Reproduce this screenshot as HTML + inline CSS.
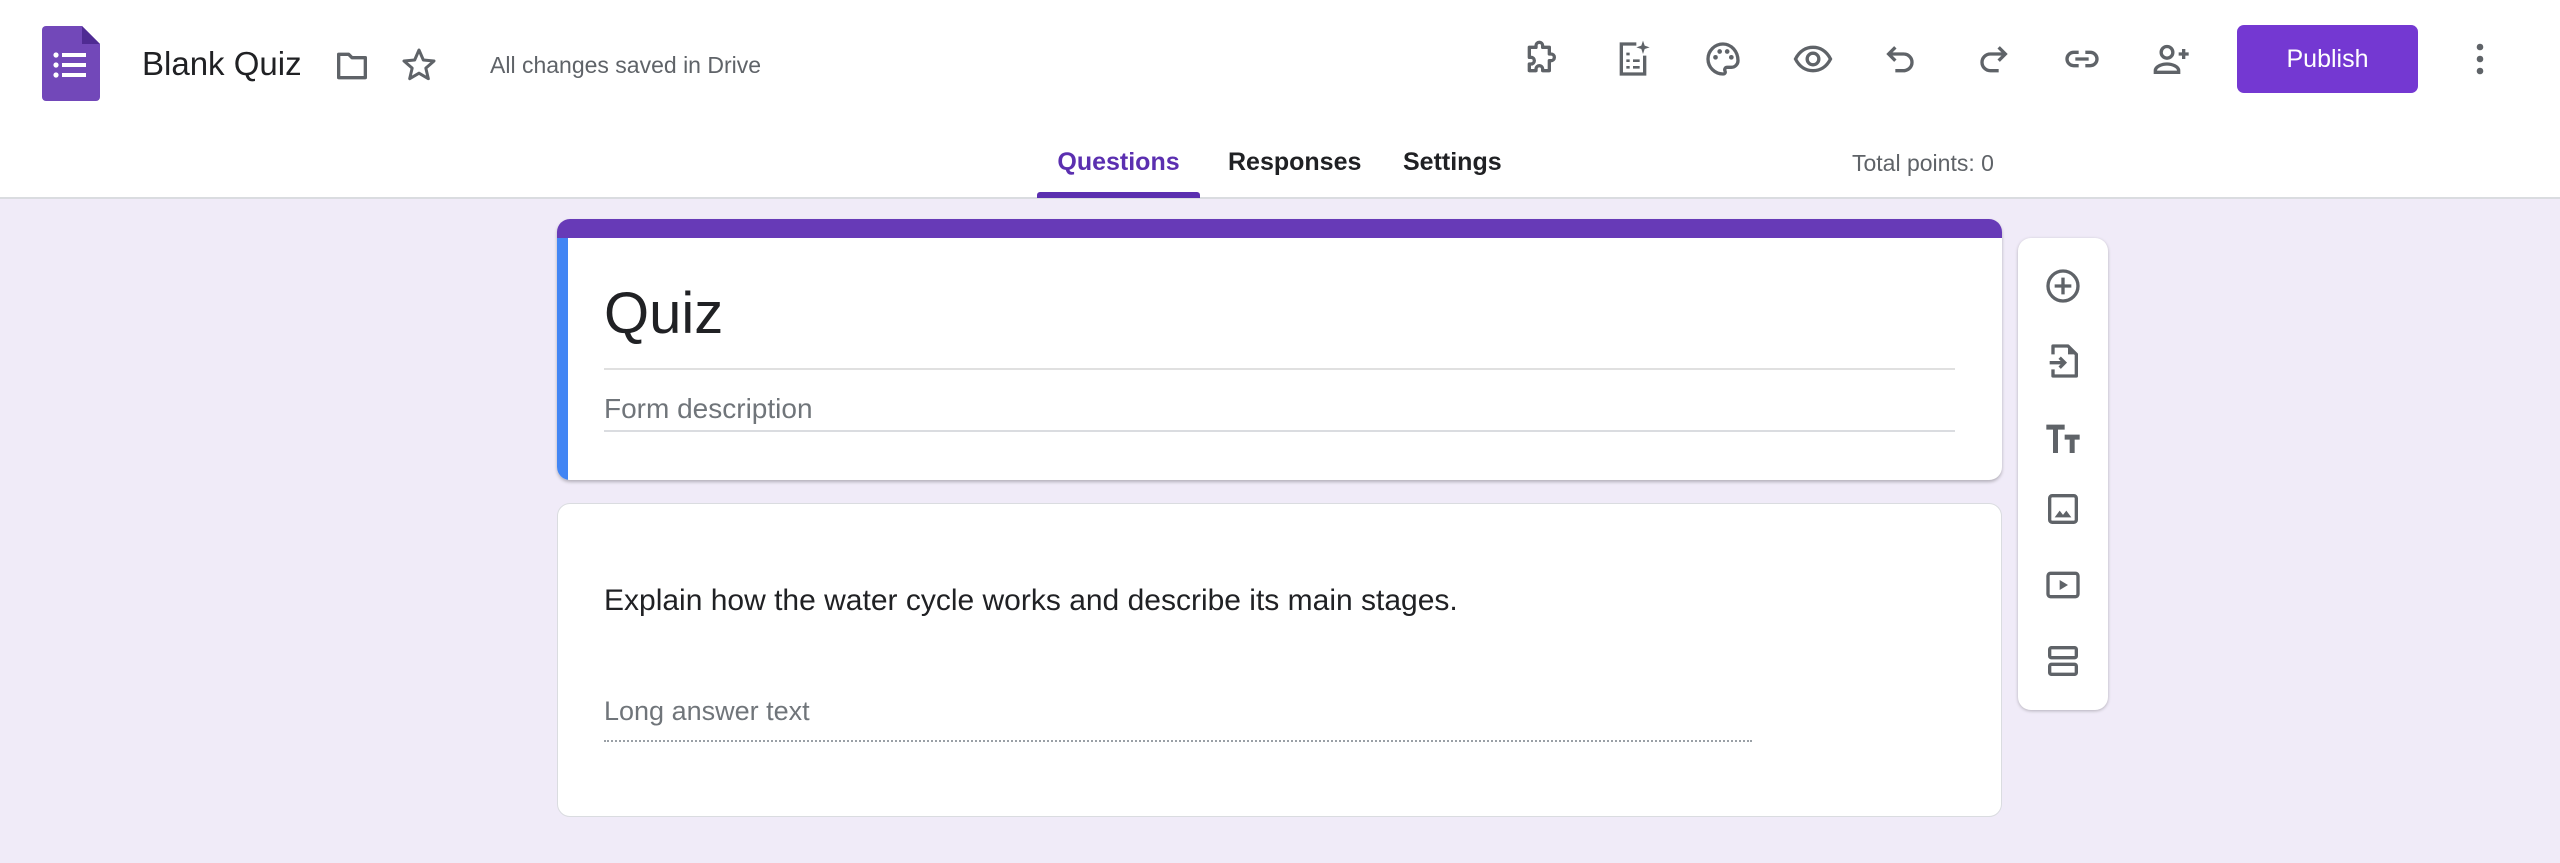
<!DOCTYPE html>
<html><head><meta charset="utf-8">
<style>
*{margin:0;padding:0;box-sizing:border-box}
body{width:2560px;height:863px;background:#f0ebf8;font-family:"Liberation Sans",Arial,sans-serif;position:relative;overflow:hidden}
.hdr{position:absolute;left:0;top:0;width:2560px;height:199px;background:#fff;border-bottom:2px solid #dadce0}
.abs{position:absolute}
.ic{position:absolute;width:40px;height:40px}
.ic svg{width:40px;height:40px}
.card{position:absolute;background:#fff;border-radius:13px;border:1px solid #dadce0}
</style></head><body>
<div class="hdr">
  <svg class="abs" style="left:42px;top:26px" width="58" height="75" viewBox="0 0 58 75">
    <path d="M4 0H40L58 18V71a4 4 0 0 1-4 4H4a4 4 0 0 1-4-4V4a4 4 0 0 1 4-4z" fill="#7248b9"/>
    <path d="M40 0L58 18H40z" fill="#4f2b93"/>
    <g fill="#fff"><circle cx="14" cy="29" r="2.6"/><circle cx="14" cy="39" r="2.6"/><circle cx="14" cy="49" r="2.6"/>
    <rect x="20" y="27" width="24" height="4"/><rect x="20" y="37" width="24" height="4"/><rect x="20" y="47" width="24" height="4"/></g>
  </svg>
  <div class="abs" style="left:142px;top:45px;font-size:33px;color:#202124">Blank Quiz</div>
  <svg class="abs" style="left:332px;top:46px" width="40" height="40" viewBox="0 0 24 24"><path d="M4 5h6l2 2h8v12H4z" fill="none" stroke="#5f6368" stroke-width="2" stroke-linejoin="round"/></svg>
  <svg class="abs" style="left:399px;top:45px" width="40" height="40" viewBox="0 0 24 24"><path d="M12 3l2.6 6 6.4.6-4.9 4.3 1.5 6.3L12 16.9 6.4 20.2l1.5-6.3L3 9.6l6.4-.6z" fill="none" stroke="#5f6368" stroke-width="1.8" stroke-linejoin="round"/></svg>
  <div class="abs" style="left:490px;top:52px;font-size:23px;color:#5f6368">All changes saved in Drive</div>

  <div class="ic" style="left:1521px;top:39px"><svg viewBox="0 0 24 24"><path d="M9 4a2 2 0 0 1 4 0v1h4v4h1a2 2 0 0 1 0 4h-1v6h-4v-1a2 2 0 0 0-4 0v1H5v-4h1a2 2 0 0 0 0-4H5V5h4z" fill="none" stroke="#5f6368" stroke-width="2" stroke-linejoin="round"/></svg></div>
  <div class="ic" style="left:1613px;top:39px"><svg viewBox="0 0 24 24"><path d="M14 3H5v18h14V10" fill="none" stroke="#5f6368" stroke-width="2"/><path d="M8 9h2M8 13h2M8 17h2M12 13h4M12 17h4" stroke="#5f6368" stroke-width="1.6"/><path d="M18 1l1 3 3 1-3 1-1 3-1-3-3-1 3-1z" fill="#5f6368"/></svg></div>
  <div class="ic" style="left:1703px;top:39px"><svg viewBox="0 0 24 24"><path d="M12 3a9 9 0 0 0 0 18c1.2 0 1.6-.9 1.2-1.8-.5-1 .1-2.2 1.3-2.2H17a4 4 0 0 0 4-4c0-5.5-4-10-9-10z" fill="none" stroke="#5f6368" stroke-width="2"/><circle cx="7.5" cy="11" r="1.4" fill="#5f6368"/><circle cx="10" cy="7.5" r="1.4" fill="#5f6368"/><circle cx="14.5" cy="7.5" r="1.4" fill="#5f6368"/><circle cx="17" cy="11" r="1.4" fill="#5f6368"/></svg></div>
  <div class="ic" style="left:1793px;top:39px"><svg viewBox="0 0 24 24"><path d="M1.5 12C4 7 8 5 12 5s8 2 10.5 7C20 17 16 19 12 19s-8-2-10.5-7z" fill="none" stroke="#5f6368" stroke-width="2"/><circle cx="12" cy="12" r="3.5" fill="none" stroke="#5f6368" stroke-width="2"/></svg></div>
  <div class="ic" style="left:1882px;top:39px"><svg viewBox="0 0 24 24"><path d="M8 5L4 9l4 4" fill="none" stroke="#5f6368" stroke-width="2"/><path d="M4 9h9a5 5 0 0 1 0 10H8" fill="none" stroke="#5f6368" stroke-width="2"/></svg></div>
  <div class="ic" style="left:1972px;top:39px"><svg viewBox="0 0 24 24"><path d="M16 5l4 4-4 4" fill="none" stroke="#5f6368" stroke-width="2"/><path d="M20 9h-9a5 5 0 0 0 0 10h5" fill="none" stroke="#5f6368" stroke-width="2"/></svg></div>
  <div class="ic" style="left:2062px;top:39px"><svg viewBox="0 0 24 24"><path d="M10 8H7a4 4 0 0 0 0 8h3M14 8h3a4 4 0 0 1 0 8h-3M8 12h8" fill="none" stroke="#5f6368" stroke-width="2"/></svg></div>
  <div class="ic" style="left:2152px;top:39px"><svg viewBox="0 0 24 24"><circle cx="9" cy="8" r="3.5" fill="none" stroke="#5f6368" stroke-width="2"/><path d="M2 20v-1c0-2.5 4-4 7-4s7 1.5 7 4v1z" fill="none" stroke="#5f6368" stroke-width="2"/><path d="M19 6v6M16 9h6" stroke="#5f6368" stroke-width="2"/></svg></div>
  <div class="abs" style="left:2237px;top:25px;width:181px;height:68px;background:#7438d2;border-radius:7px;color:#fff;font-size:25px;line-height:68px;text-align:center">Publish</div>
  <svg class="abs" style="left:2470px;top:39px" width="20" height="40" viewBox="0 0 20 40"><circle cx="10" cy="8" r="3.3" fill="#5f6368"/><circle cx="10" cy="20" r="3.3" fill="#5f6368"/><circle cx="10" cy="32" r="3.3" fill="#5f6368"/></svg>

  <div class="abs" style="left:1037px;top:148px;width:163px;text-align:center;font-size:25px;color:#5b2fb0;font-weight:bold">Questions</div>
  <div class="abs" style="left:1037px;top:192px;width:163px;height:6px;background:#5b2fb0;border-radius:3px 3px 0 0"></div>
  <div class="abs" style="left:1228px;top:148px;font-size:25px;color:#202124;font-weight:bold">Responses</div>
  <div class="abs" style="left:1403px;top:148px;font-size:25px;color:#202124;font-weight:bold">Settings</div>
  <div class="abs" style="left:1852px;top:150px;font-size:23px;color:#5f6368">Total points: 0</div>
</div>

<div class="card" style="left:557px;top:219px;width:1445px;height:261px;overflow:hidden;border:none;box-shadow:0 2px 3px rgba(0,0,0,.25)">
  <div class="abs" style="left:0;top:0;width:100%;height:19px;background:#673ab7"></div>
  <div class="abs" style="left:0;top:19px;width:11px;height:242px;background:#4285f4"></div>
  <div class="abs" style="left:47px;top:61px;font-size:58px;color:#202124">Quiz</div>
  <div class="abs" style="left:47px;top:149px;width:1351px;height:2px;background:#e0e0e0"></div>
  <div class="abs" style="left:47px;top:174px;font-size:28px;color:#70757a">Form description</div>
  <div class="abs" style="left:47px;top:211px;width:1351px;height:2px;background:#dadce0"></div>
</div>

<div class="card" style="left:557px;top:503px;width:1445px;height:314px">
  <div class="abs" style="left:46px;top:80px;font-size:30px;color:#202124">Explain how the water cycle works and describe its main stages.</div>
  <div class="abs" style="left:46px;top:192px;font-size:27px;color:#70757a">Long answer text</div>
  <div class="abs" style="left:46px;top:236px;width:1148px;border-top:2px dotted #9aa0a6"></div>
</div>

<div class="card" style="left:2018px;top:238px;width:90px;height:472px;border:none;box-shadow:0 1px 3px rgba(0,0,0,.25)">
  <svg class="abs" style="left:25px;top:28px" width="40" height="40" viewBox="0 0 24 24"><circle cx="12" cy="12" r="9" fill="none" stroke="#5f6368" stroke-width="2"/><path d="M12 7v10M7 12h10" stroke="#5f6368" stroke-width="2"/></svg>
  <svg class="abs" style="left:25px;top:103px" width="40" height="40" viewBox="0 0 24 24"><path d="M6 8V3h9l5 5v13H6v-4" fill="none" stroke="#5f6368" stroke-width="2" stroke-linejoin="round"/><path d="M15 3v5h5z" fill="#5f6368"/><path d="M4 13h9M10 10l3 3-3 3" fill="none" stroke="#5f6368" stroke-width="2"/></svg>
  <svg class="abs" style="left:25px;top:180px" width="40" height="40" viewBox="0 0 24 24"><path d="M2 4h11v3H9v14H6V7H2zM13 10h9v3h-3v8h-3v-8h-3z" fill="#5f6368"/></svg>
  <svg class="abs" style="left:25px;top:251px" width="40" height="40" viewBox="0 0 24 24"><rect x="4" y="4" width="16" height="16" rx="1.5" fill="none" stroke="#5f6368" stroke-width="2"/><path d="M7 17l3-4 2 2.5 2-2.5 3 4z" fill="#5f6368"/></svg>
  <svg class="abs" style="left:25px;top:327px" width="40" height="40" viewBox="0 0 24 24"><rect x="3" y="5" width="18" height="14" rx="1.5" fill="none" stroke="#5f6368" stroke-width="2"/><path d="M10 9v6l5-3z" fill="#5f6368"/></svg>
  <svg class="abs" style="left:25px;top:403px" width="40" height="40" viewBox="0 0 24 24"><rect x="4" y="4" width="16" height="6" rx="1" fill="none" stroke="#5f6368" stroke-width="2"/><rect x="4" y="14" width="16" height="6" rx="1" fill="none" stroke="#5f6368" stroke-width="2"/></svg>
</div>
</body></html>
